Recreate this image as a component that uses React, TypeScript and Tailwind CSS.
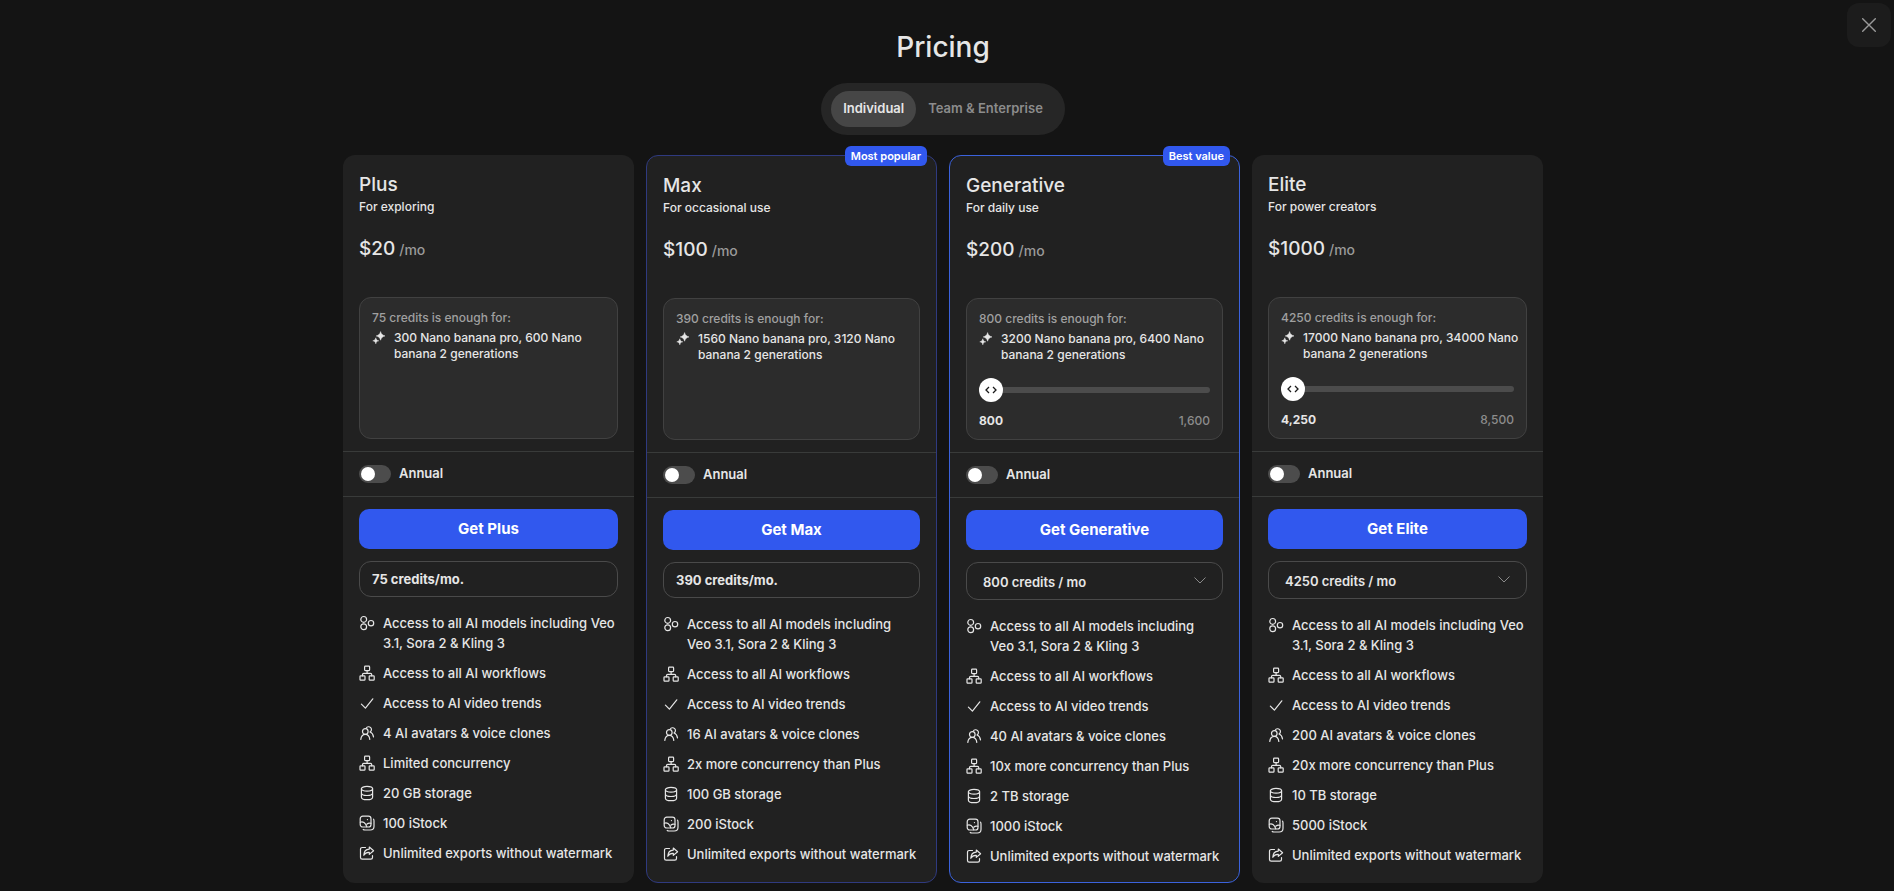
import React, { useState } from 'react';

type IconName = 'models' | 'flow' | 'check' | 'avatars' | 'storage' | 'stock' | 'export';

interface Plan {
    name: string;
    tagline: string;
    price: string;
    credits: number;
    generations: string;
    models: string;
    badge?: string;
    border: string;
    slider?: boolean;
    avatars: number;
    concurrency: string;
    storage: string;
    stock: number;
}

const plans: Plan[] = [
    {
        name: 'Plus',
        tagline: 'For exploring',
        price: '$20',
        credits: 75,
        generations: '300 Nano banana pro, 600 Nano\nbanana 2 generations',
        models: 'Access to all AI models including Veo\n3.1, Sora 2 & Kling 3',
        border: '',
        avatars: 4,
        concurrency: 'Limited concurrency',
        storage: '20 GB',
        stock: 100
    },
    {
        name: 'Max',
        tagline: 'For occasional use',
        price: '$100',
        credits: 390,
        generations: '1560 Nano banana pro, 3120 Nano\nbanana 2 generations',
        models: 'Access to all AI models including\nVeo 3.1, Sora 2 & Kling 3',
        badge: 'Most popular',
        border: 'border border-[#2f3a80]',
        avatars: 16,
        concurrency: '2x more concurrency than Plus',
        storage: '100 GB',
        stock: 200
    },
    {
        name: 'Generative',
        tagline: 'For daily use',
        price: '$200',
        credits: 800,
        generations: '3200 Nano banana pro, 6400 Nano\nbanana 2 generations',
        models: 'Access to all AI models including\nVeo 3.1, Sora 2 & Kling 3',
        badge: 'Best value',
        border: 'border border-[#3b62dc]',
        slider: true,
        avatars: 40,
        concurrency: '10x more concurrency than Plus',
        storage: '2 TB',
        stock: 1000
    },
    {
        name: 'Elite',
        tagline: 'For power creators',
        price: '$1000',
        credits: 4250,
        generations: '17000 Nano banana pro, 34000 Nano\nbanana 2 generations',
        models: 'Access to all AI models including Veo\n3.1, Sora 2 & Kling 3',
        border: '',
        slider: true,
        avatars: 200,
        concurrency: '20x more concurrency than Plus',
        storage: '10 TB',
        stock: 5000
    }
];

const iconShapes: Record<IconName, React.ReactNode> = {
    models: (
        <>
            <circle cx="4.7" cy="4.4" r="2.9" />
            <circle cx="4.7" cy="11.8" r="2.9" />
            <circle cx="12" cy="8.2" r="2.7" />
        </>
    ),
    flow: (
        <>
            <rect x="5.6" y="1.2" width="5" height="4.4" rx="0.8" />
            <rect x="1" y="10.8" width="5" height="4.400" rx="0.8" />
            <rect x="10.2" y="10.8" width="5" height="4.4" rx="0.8" />
            <path d="M8.100 5.600v2.700M3.500 10.800V9.600c0-.8.500-1.300 1.300-1.300h6.600c.8 0 1.300.5 1.300 1.300v1.200" />
        </>
    ),
    check: <path d="M2.4 9.2l4 4L13.8 3.8" />,
    avatars: (
        <>
            <circle cx="6.3" cy="6.5" r="2.8" />
            <path d="M1.800 14.400c.3-3.100 2-5.100 4.500-5.100s4.200 2 4.500 5.100" />
            <path d="M7.200 3.200a2.800 2.800 0 1 1 3.800 3.800c2 .7 3.200 2.400 3.500 4.900" />
        </>
    ),
    storage: (
        <>
            <ellipse cx="8" cy="3.800" rx="5.600" ry="2.400" />
            <path d="M2.400 3.800v8.400c0 1.400 2.500 2.500 5.600 2.500s5.600-1.100 5.600-2.500V3.800M2.400 8c0 1.400 2.500 2.500 5.600 2.500s5.600-1.100 5.600-2.500" />
        </>
    ),
    stock: (
        <>
            <rect x="1.200" y="1.200" width="10.800" height="10.800" rx="2.600" />
            <path d="M4.200 14.500c.5.400 1.100.5 1.800.5h5.200c2.200 0 3.800-1.600 3.800-3.800V6c0-.7-.1-1.300-.5-1.800" />
            <path d="M1.400 7.200c2.500-1 5 .5 6.400 4.600M8 9c1.200-1 2.500-1.200 3.900-.7" />
            <path d="M8.400 4.600h.1" />
        </>
    ),
    export: (
        <>
            <path d="M6.500 2.500H3.200c-1 0-1.700.7-1.700 1.700v8.300c0 1 .7 1.700 1.700 1.700h8.600c1 0 1.700-.7 1.700-1.700v-2" />
            <path d="M10.300 2l4.300 3.700-4.300 3.700V7.300C7.800 7.100 6 8 4.800 10.300c.1-3.600 2-6 5.500-6.200z" />
        </>
    )
};

const FeatureIcon = ({ name }: { name: IconName }) => (
    <svg
        viewBox="0 0 16 16"
        fill="none"
        stroke="currentColor"
        strokeWidth="1.2"
        strokeLinecap="round"
        strokeLinejoin="round"
        className="mt-0.5 size-4 shrink-0"
        aria-hidden="true"
    >
        {iconShapes[name]}
    </svg>
);

const Sparkles = () => (
    <svg viewBox="0 0 14 14" fill="currentColor" className="mt-px size-3.5 shrink-0" aria-hidden="true">
        <path d="M8.600.600c.6 2.600 1.700 3.600 4.400 4.300-2.700.7-3.800 1.700-4.400 4.300-.6-2.600-1.700-3.600-4.400-4.300 2.700-.7 3.800-1.700 4.400-4.300z" stroke="currentColor" strokeWidth=".5" />
        <path d="M3.800 6.800c.4 1.900 1.100 2.600 3 3-1.900.4-2.600 1.100-3 3-.4-1.900-1.100-2.600-3-3 1.900-.4 2.600-1.100 3-3z" stroke="currentColor" strokeWidth=".5" />
    </svg>
);

const CreditSlider = ({ plan }: { plan: Plan }) => (
    <div className="mt-[15px]">
        <div className="relative flex h-6 items-center">
            <input
                type="range"
                aria-label={`${plan.name} credits`}
                min={plan.credits}
                max={plan.credits * 2}
                defaultValue={plan.credits}
                className="h-1.5 w-full cursor-pointer appearance-none rounded-full bg-[#4c4c4c] [&::-webkit-slider-thumb]:size-6 [&::-webkit-slider-thumb]:appearance-none [&::-webkit-slider-thumb]:rounded-full [&::-webkit-slider-thumb]:bg-white"
            />
            <svg
                viewBox="0 0 24 24"
                fill="none"
                stroke="#1a1a1a"
                strokeWidth="1.3"
                className="pointer-events-none absolute top-0 left-0 size-6"
                aria-hidden="true"
            >
                <path d="M10 9l-3 3 3 3M14 9l3 3-3 3" />
            </svg>
        </div>
        <div className="mt-[11px] flex justify-between">
            <span className="font-bold">{plan.credits.toLocaleString('en-US')}</span>
            <span className="font-medium text-[#8c8c8c]">{(plan.credits * 2).toLocaleString('en-US')}</span>
        </div>
    </div>
);

const PlanCard = ({ plan }: { plan: Plan }) => {
    const features: { icon: IconName; text: string }[] = [
        { icon: 'models', text: plan.models },
        { icon: 'flow', text: 'Access to all AI workflows' },
        { icon: 'check', text: 'Access to AI video trends' },
        { icon: 'avatars', text: `${plan.avatars} AI avatars & voice clones` },
        { icon: 'flow', text: plan.concurrency },
        { icon: 'storage', text: `${plan.storage} storage` },
        { icon: 'stock', text: `${plan.stock} iStock` },
        { icon: 'export', text: 'Unlimited exports without watermark' }
    ];

    return (
        <section className={`relative rounded-xl bg-[#212121] pb-4 ${plan.border}`}>
            {plan.badge && (
                <span className="absolute -top-2.5 right-[9px] h-5 rounded-md bg-[#3158ee] px-1.5 text-[11px] leading-5 font-semibold text-white">
                    {plan.badge}
                </span>
            )}

            <div className="px-4 pt-4">
                <h2 className="text-[19px] leading-7 font-medium">{plan.name}</h2>
                <p className="text-xs leading-4 font-medium">{plan.tagline}</p>
                <p className="mt-5 flex items-baseline gap-1 text-[19px] leading-7 font-medium">
                    {plan.price}
                    <span className="text-sm leading-5 text-[#9a9a9a]">/mo</span>
                </p>
                <div className="mt-8.5 h-[142px] rounded-xl border border-[#414141] bg-[#2c2c2c] p-3 text-xs leading-4 font-medium">
                    <p className="text-[#a0a0a0]">{plan.credits} credits is enough for:</p>
                    <div className="mt-1 flex gap-2">
                        <Sparkles />
                        <p className="whitespace-pre">{plan.generations}</p>
                    </div>
                    {plan.slider && <CreditSlider plan={plan} />}
                </div>
            </div>

            <label className="mt-3 flex h-[46px] items-center gap-2 border-y border-[#393b3a] px-4 text-[13px] font-semibold">
                <input
                    type="checkbox"
                    role="switch"
                    className="flex h-[18px] w-8 cursor-pointer appearance-none items-center rounded-full bg-[#4c4c4c] px-0.5 before:size-3.5 before:rounded-full before:bg-white checked:bg-[#3158ee] checked:before:translate-x-3.5"
                />
                Annual
            </label>

            <div className="px-4 pt-3 text-[13px] leading-5">
                <button className="h-10 w-full rounded-[10px] bg-[#3158ee] text-[15px] font-bold text-white hover:bg-[#456af2]">
                    Get {plan.name}
                </button>
                {plan.slider ? (
                    <div className="relative mt-3">
                        <select
                            aria-label="Credits per month"
                            className="block h-[38px] w-full appearance-none rounded-xl border border-[#4a4a4a] bg-transparent px-4 pt-0.5 font-semibold"
                        >
                            <option>{plan.credits} credits / mo</option>
                            <option>{plan.credits * 2} credits / mo</option>
                        </select>
                        <svg
                            viewBox="0 0 12 12"
                            fill="none"
                            stroke="#8a8a8a"
                            className="pointer-events-none absolute top-3 right-[17px] size-3"
                            aria-hidden="true"
                        >
                            <path d="M.5 3.5L6 9l5.500-5.500" />
                        </svg>
                    </div>
                ) : (
                    <p className="mt-3 flex h-9 items-center rounded-xl border border-[#4a4a4a] px-3 font-bold">
                        {plan.credits} credits/mo.
                    </p>
                )}
                <ul className="mt-4 flex flex-col gap-2.5 font-medium">
                    {features.map(feature => (
                        <li key={feature.text} className="flex gap-2">
                            <FeatureIcon name={feature.icon} />
                            <span className="whitespace-pre">{feature.text}</span>
                        </li>
                    ))}
                </ul>
            </div>
        </section>
    );
};

const App: React.FC = () => {
    const [audience, setAudience] = useState('Individual');

    return (
        <div className="min-h-screen bg-[#141414] pr-2 pb-2 font-['Inter',sans-serif] text-[#e6e6e6]">
            <button
                aria-label="Close"
                className="absolute top-[3px] right-[3px] flex size-11 items-center justify-center rounded-xl bg-[#1c1c1c] text-[#9a9a9a] hover:text-white"
            >
                <svg viewBox="0 0 14 14" fill="none" stroke="currentColor" strokeWidth="1.4" strokeLinecap="round" className="size-3.5">
                    <path d="M.7.7l12.600 12.600M13.300.7L.7 13.300" />
                </svg>
            </button>

            <main className="mx-auto flex max-w-[1200px] flex-col items-center pt-[29px]">
                <h1 className="text-[28px] leading-9 font-medium">Pricing</h1>

                <div className="mt-4.5 flex rounded-full bg-[#262626] px-2.5 py-2 text-[13px]">
                    {['Individual', 'Team & Enterprise'].map(tab => (
                        <button
                            key={tab}
                            onClick={() => setAudience(tab)}
                            className={`h-9 rounded-full px-3 font-semibold ${audience === tab ? 'bg-[#464646]' : 'text-[#8c8c8c]'}`}
                        >
                            {tab}
                        </button>
                    ))}
                </div>

                <div className="mt-5 grid w-full grid-cols-4 gap-3">
                    {plans.map(plan => (
                        <PlanCard key={plan.name} plan={plan} />
                    ))}
                </div>
            </main>
        </div>
    );
};

export default App;
